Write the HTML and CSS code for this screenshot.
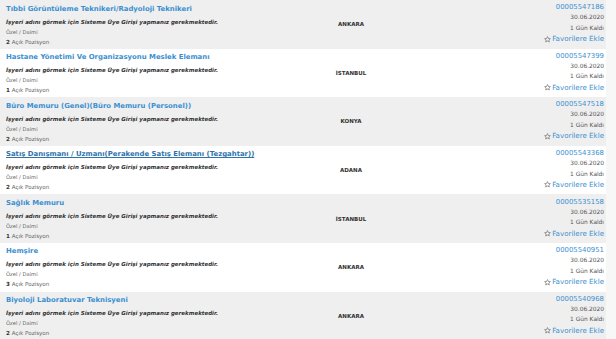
FILE: index.html
```html
<!DOCTYPE html>
<html lang="tr">
<head>
    <meta charset="UTF-8">
    <meta name="viewport" content="width=device-width, initial-scale=1.0">
    <title>İş İlanları</title>
    <link rel="stylesheet" href="styles.css">
</head>
<body>

<div class="ilanlar">
    <div class="ilan">
        <div class="ilan-sol">
            <a class="baslik" href="#">Tıbbi Görüntüleme Teknikeri/Radyoloji Teknikeri</a>
            <p class="firma">İşyeri adını görmek için Sisteme Üye Girişi yapmanız gerekmektedir.</p>
            <p class="tur">Özel / Daimi</p>
            <p class="pozisyon"><b>2</b> Açık Pozisyon</p>
        </div>
        <div class="sehir">ANKARA</div>
        <div class="ilan-sag">
            <a class="no" href="#">00005547186</a>
            <span class="tarih">30.06.2020</span>
            <span class="kalan">1 Gün Kaldı</span>
            <a class="favori" href="#"><svg viewBox="0 0 10 10"><path d="M5 .8l1.2 2.7 2.9.3-2.2 1.9.7 2.9L5 7.1 2.4 8.6l.7-2.9L.9 3.8l2.9-.3z"/></svg>Favorilere Ekle</a>
        </div>
    </div>

    <div class="ilan">
        <div class="ilan-sol">
            <a class="baslik" href="#">Hastane Yönetimi Ve Organizasyonu Meslek Elemanı</a>
            <p class="firma">İşyeri adını görmek için Sisteme Üye Girişi yapmanız gerekmektedir.</p>
            <p class="tur">Özel / Daimi</p>
            <p class="pozisyon"><b>1</b> Açık Pozisyon</p>
        </div>
        <div class="sehir">İSTANBUL</div>
        <div class="ilan-sag">
            <a class="no" href="#">00005547399</a>
            <span class="tarih">30.06.2020</span>
            <span class="kalan">1 Gün Kaldı</span>
            <a class="favori" href="#"><svg viewBox="0 0 10 10"><path d="M5 .8l1.2 2.7 2.9.3-2.2 1.9.7 2.9L5 7.1 2.4 8.6l.7-2.9L.9 3.8l2.9-.3z"/></svg>Favorilere Ekle</a>
        </div>
    </div>

    <div class="ilan">
        <div class="ilan-sol">
            <a class="baslik" href="#">Büro Memuru (Genel)(Büro Memuru (Personel))</a>
            <p class="firma">İşyeri adını görmek için Sisteme Üye Girişi yapmanız gerekmektedir.</p>
            <p class="tur">Özel / Daimi</p>
            <p class="pozisyon"><b>2</b> Açık Pozisyon</p>
        </div>
        <div class="sehir">KONYA</div>
        <div class="ilan-sag">
            <a class="no" href="#">00005547518</a>
            <span class="tarih">30.06.2020</span>
            <span class="kalan">1 Gün Kaldı</span>
            <a class="favori" href="#"><svg viewBox="0 0 10 10"><path d="M5 .8l1.2 2.7 2.9.3-2.2 1.9.7 2.9L5 7.1 2.4 8.6l.7-2.9L.9 3.8l2.9-.3z"/></svg>Favorilere Ekle</a>
        </div>
    </div>

    <div class="ilan">
        <div class="ilan-sol">
            <a class="baslik aktif" href="#">Satış Danışmanı / Uzmanı(Perakende Satış Elemanı (Tezgahtar))</a>
            <p class="firma">İşyeri adını görmek için Sisteme Üye Girişi yapmanız gerekmektedir.</p>
            <p class="tur">Özel / Daimi</p>
            <p class="pozisyon"><b>2</b> Açık Pozisyon</p>
        </div>
        <div class="sehir">ADANA</div>
        <div class="ilan-sag">
            <a class="no" href="#">00005543368</a>
            <span class="tarih">30.06.2020</span>
            <span class="kalan">1 Gün Kaldı</span>
            <a class="favori" href="#"><svg viewBox="0 0 10 10"><path d="M5 .8l1.2 2.7 2.9.3-2.2 1.9.7 2.9L5 7.1 2.4 8.6l.7-2.9L.9 3.8l2.9-.3z"/></svg>Favorilere Ekle</a>
        </div>
    </div>

    <div class="ilan">
        <div class="ilan-sol">
            <a class="baslik" href="#">Sağlık Memuru</a>
            <p class="firma">İşyeri adını görmek için Sisteme Üye Girişi yapmanız gerekmektedir.</p>
            <p class="tur">Özel / Daimi</p>
            <p class="pozisyon"><b>1</b> Açık Pozisyon</p>
        </div>
        <div class="sehir">İSTANBUL</div>
        <div class="ilan-sag">
            <a class="no" href="#">00005535158</a>
            <span class="tarih">30.06.2020</span>
            <span class="kalan">1 Gün Kaldı</span>
            <a class="favori" href="#"><svg viewBox="0 0 10 10"><path d="M5 .8l1.2 2.7 2.9.3-2.2 1.9.7 2.9L5 7.1 2.4 8.6l.7-2.9L.9 3.8l2.9-.3z"/></svg>Favorilere Ekle</a>
        </div>
    </div>

    <div class="ilan">
        <div class="ilan-sol">
            <a class="baslik" href="#">Hemşire</a>
            <p class="firma">İşyeri adını görmek için Sisteme Üye Girişi yapmanız gerekmektedir.</p>
            <p class="tur">Özel / Daimi</p>
            <p class="pozisyon"><b>3</b> Açık Pozisyon</p>
        </div>
        <div class="sehir">ANKARA</div>
        <div class="ilan-sag">
            <a class="no" href="#">00005540951</a>
            <span class="tarih">30.06.2020</span>
            <span class="kalan">1 Gün Kaldı</span>
            <a class="favori" href="#"><svg viewBox="0 0 10 10"><path d="M5 .8l1.2 2.7 2.9.3-2.2 1.9.7 2.9L5 7.1 2.4 8.6l.7-2.9L.9 3.8l2.9-.3z"/></svg>Favorilere Ekle</a>
        </div>
    </div>

    <div class="ilan">
        <div class="ilan-sol">
            <a class="baslik" href="#">Biyoloji Laboratuvar Teknisyeni</a>
            <p class="firma">İşyeri adını görmek için Sisteme Üye Girişi yapmanız gerekmektedir.</p>
            <p class="tur">Özel / Daimi</p>
            <p class="pozisyon"><b>2</b> Açık Pozisyon</p>
        </div>
        <div class="sehir">ANKARA</div>
        <div class="ilan-sag">
            <a class="no" href="#">00005540968</a>
            <span class="tarih">30.06.2020</span>
            <span class="kalan">1 Gün Kaldı</span>
            <a class="favori" href="#"><svg viewBox="0 0 10 10"><path d="M5 .8l1.2 2.7 2.9.3-2.2 1.9.7 2.9L5 7.1 2.4 8.6l.7-2.9L.9 3.8l2.9-.3z"/></svg>Favorilere Ekle</a>
        </div>
    </div>
</div>

</body>
</html>
```

FILE: styles.css
```css
body {
    font-family: "DejaVu Sans", Verdana, sans-serif;
    margin: 0;
    padding: 0;
    background-color: #f7f7f7;
    overflow: hidden;
}
.ilanlar {
    width: 606px;
}
.ilan {
    display: grid;
    grid-template-columns: 294px 102px 1fr;
    height: 48.6px;
    box-sizing: border-box;
    padding: 0 2px 0 6px;
    background: #fff;
}
.ilan:nth-child(odd) {
    background: #efefef;
}
.ilan-sol {
    padding-top: 2.5px;
    white-space: nowrap;
}
.ilan-sol p {
    margin: 0;
    line-height: 10px;
}
.baslik {
    display: block;
    line-height: 12px;
    font-size: 6.9px;
    font-weight: bold;
    color: #3c8fcf;
    text-decoration: none;
}
.baslik.aktif {
    color: #2f73ab;
    text-decoration: underline;
}
.firma {
    margin-top: 2px !important;
    font-size: 5.5px;
    font-weight: bold;
    font-style: italic;
    color: #333;
}
.tur {
    font-size: 5.2px;
    color: #666;
}
.pozisyon {
    font-size: 5.6px;
    color: #666;
}
.pozisyon b {
    color: #333;
}
.sehir {
    display: flex;
    align-items: center;
    justify-content: center;
    font-size: 5.5px;
    font-weight: bold;
    color: #333;
}
.ilan-sag {
    display: flex;
    flex-direction: column;
    align-items: flex-end;
    padding-top: 2.3px;
    white-space: nowrap;
}
.no {
    line-height: 10px;
    font-size: 6.9px;
    color: #3c8fcf;
    text-decoration: none;
}
.tarih, .kalan {
    line-height: 10.5px;
    font-size: 5.9px;
    color: #555;
}
.favori {
    display: flex;
    align-items: center;
    gap: 1.5px;
    line-height: 11.5px;
    font-size: 7.1px;
    color: #3c8fcf;
    text-decoration: none;
}
.favori svg {
    width: 7px;
    height: 7px;
    fill: none;
    stroke: #666;
    stroke-width: 0.9;
    stroke-linejoin: round;
}
```
